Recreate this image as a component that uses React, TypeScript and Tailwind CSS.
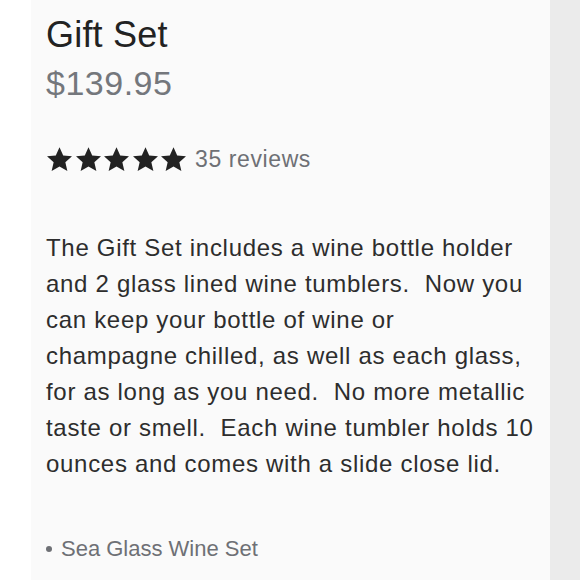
import React from "react";

const lines = [
  "The Gift Set includes a wine bottle holder",
  "and 2 glass lined wine tumblers.\u00a0 Now you",
  "can keep your bottle of wine or",
  "champagne chilled, as well as each glass,",
  "for as long as you need.\u00a0 No more metallic",
  "taste or smell.\u00a0 Each wine tumbler holds 10",
  "ounces and comes with a slide close lid.",
];

function Star() {
  return (
    <svg viewBox="0 0 24 24" className="w-[27px] h-[27px]" fill="#222">
      <path d="M12 1.2l3.3 7.2 7.8.8-5.9 5.2 1.8 7.8L12 18.2l-7 4 1.8-7.8-5.9-5.2 7.8-.8z" />
    </svg>
  );
}

export default function App() {
  return (
    <div className="w-[580px] h-[580px] overflow-hidden bg-white flex font-['Liberation_Sans',Arial,sans-serif]">
      <div className="w-[31px] shrink-0 bg-white" />
      <div className="w-[519px] shrink-0 bg-[#fafafa] pl-[15px]">
        <h1 className="text-[36px] leading-[40px] text-[#222] mt-[15px] tracking-[0.2px]">Gift Set</h1>
        <div className="text-[34px] leading-[40px] text-[#74777c] mt-[8px] tracking-[0.5px]">$139.95</div>
        <div className="flex items-center mt-[39px] gap-[8px]">
          <div className="flex gap-[1.5px]">
            <Star />
            <Star />
            <Star />
            <Star />
            <Star />
          </div>
          <span className="text-[23px] text-[#6e7075] tracking-[0.6px]">35 reviews</span>
        </div>
        <div className="mt-[53px] text-[24px] leading-[36px] text-[#2d2d2d] tracking-[0.7px]">
          {lines.map((l) => (
            <div key={l} className="whitespace-nowrap">
              {l}
            </div>
          ))}
        </div>
        <ul className="mt-[52px] text-[22px] text-[#6e7075] leading-[30px]">
          <li className="flex items-center gap-[9px]">
            <span className="w-[6px] h-[6px] rounded-full bg-[#6e7075]" />
            Sea Glass Wine Set
          </li>
        </ul>
      </div>
      <div className="flex-1 bg-[#ebebeb]" />
    </div>
  );
}
